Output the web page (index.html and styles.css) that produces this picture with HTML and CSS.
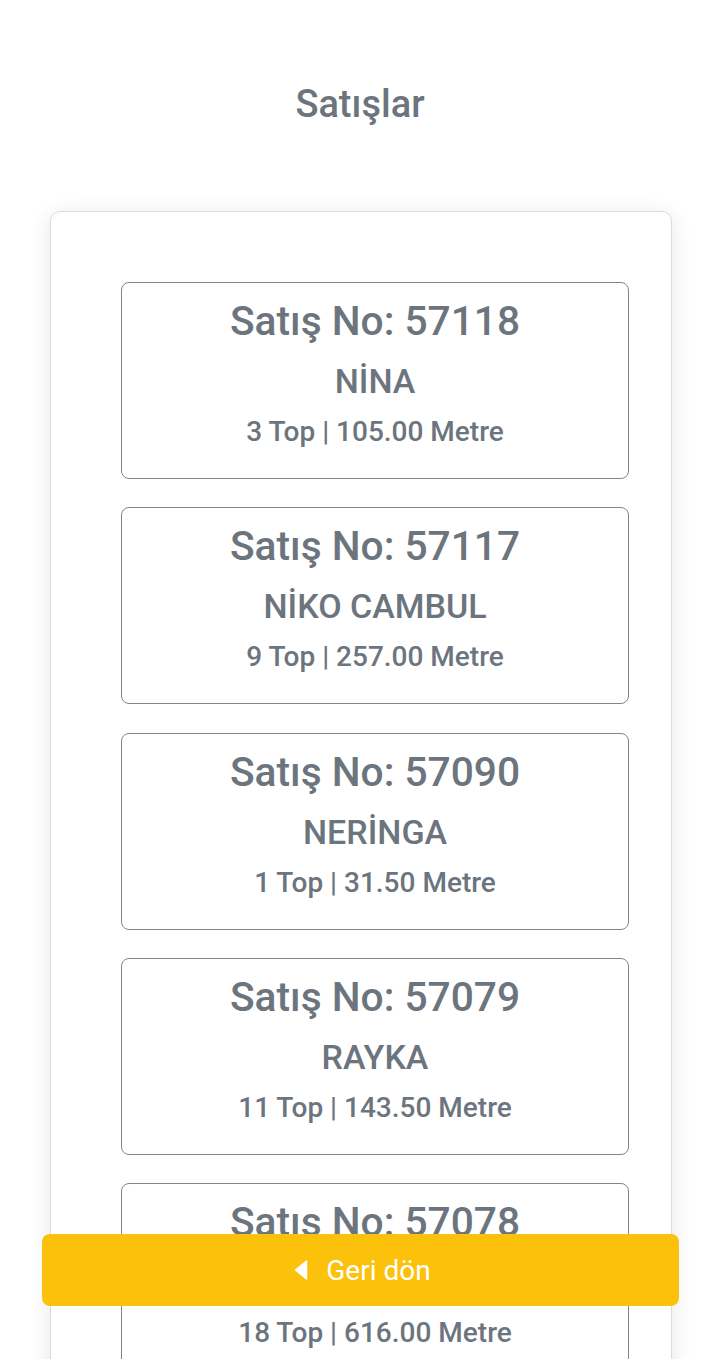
FILE: index.html
```html
<!DOCTYPE html>
<html lang="tr">
<head>
<meta charset="utf-8">
<title>Satışlar</title>
<link rel="stylesheet" href="styles.css">
</head>
<body>
<main class="page">
  <h1 class="page-title">Satışlar</h1>
  <section class="panel">
    <ul class="sales">
      <li class="sale">
        <div class="sale-no">Satış No: 57118</div>
        <div class="sale-name">NİNA</div>
        <div class="sale-stats">3 Top | 105.00 Metre</div>
      </li>
      <li class="sale">
        <div class="sale-no">Satış No: 57117</div>
        <div class="sale-name">NİKO CAMBUL</div>
        <div class="sale-stats">9 Top | 257.00 Metre</div>
      </li>
      <li class="sale">
        <div class="sale-no">Satış No: 57090</div>
        <div class="sale-name">NERİNGA</div>
        <div class="sale-stats">1 Top | 31.50 Metre</div>
      </li>
      <li class="sale">
        <div class="sale-no">Satış No: 57079</div>
        <div class="sale-name">RAYKA</div>
        <div class="sale-stats">11 Top | 143.50 Metre</div>
      </li>
      <li class="sale">
        <div class="sale-no">Satış No: 57078</div>
        <div class="sale-name">ALİ</div>
        <div class="sale-stats">18 Top | 616.00 Metre</div>
      </li>
    </ul>
  </section>
</main>
<button class="back-btn" type="button">
  <svg class="back-icon" viewBox="0 0 14 20" width="14" height="20" aria-hidden="true"><path d="M12.5 1 L1.5 10 L12.5 19 Z" fill="#fff" stroke="#fff" stroke-width="1.5" stroke-linejoin="round"/></svg>
  <span>Geri dön</span>
</button>
</body>
</html>
```
FILE: styles.css
```css
* { box-sizing: border-box; }
html, body {
  margin: 0;
  padding: 0;
  background: #fff;
  font-family: Roboto, "Noto Sans", "Liberation Sans", sans-serif;
  color: #6c757d;
}
body { overflow: hidden; height: 1359px; }
.page {
  display: flex;
  flex-direction: column;
  align-items: center;
  padding-top: 81px;
}
.page-title {
  margin: 0;
  font-size: 38px;
  font-weight: 500;
  line-height: 46px;
  color: #6c757d;
}
.panel {
  margin-top: 84px;
  width: 622px;
  margin-left: 2px;
  background: #fff;
  border: 1px solid #dcdcdc;
  border-radius: 10px;
  box-shadow: 0 4px 22px rgba(0,0,0,0.10);
  padding: 70px 42px 0 70px;
}
.sales {
  list-style: none;
  margin: 0;
  padding: 0;
  display: flex;
  flex-direction: column;
  gap: 28.25px;
}
.sale {
  border: 1px solid #80868c;
  border-radius: 8px;
  padding: 14px 0 29px;
  display: flex;
  flex-direction: column;
  align-items: center;
  text-align: center;
  font-weight: 500;
}
.sale-no {
  font-size: 40.7px;
  line-height: 48px;
}
.sale-name {
  margin-top: 16px;
  font-size: 34px;
  line-height: 40px;
}
.sale-stats {
  margin-top: 14px;
  font-size: 28px;
  line-height: 34px;
}
.back-btn {
  position: fixed;
  left: 42px;
  right: 41px;
  bottom: 53px;
  height: 72px;
  border: none;
  border-radius: 8px;
  background: #fcc10a;
  color: #fff;
  font-family: Roboto, "Noto Sans", "Liberation Sans", sans-serif;
  font-size: 28px;
  display: flex;
  align-items: center;
  justify-content: center;
  gap: 18px;
  padding: 0 0 0 4px;
}
.back-icon { display: block; }
```
